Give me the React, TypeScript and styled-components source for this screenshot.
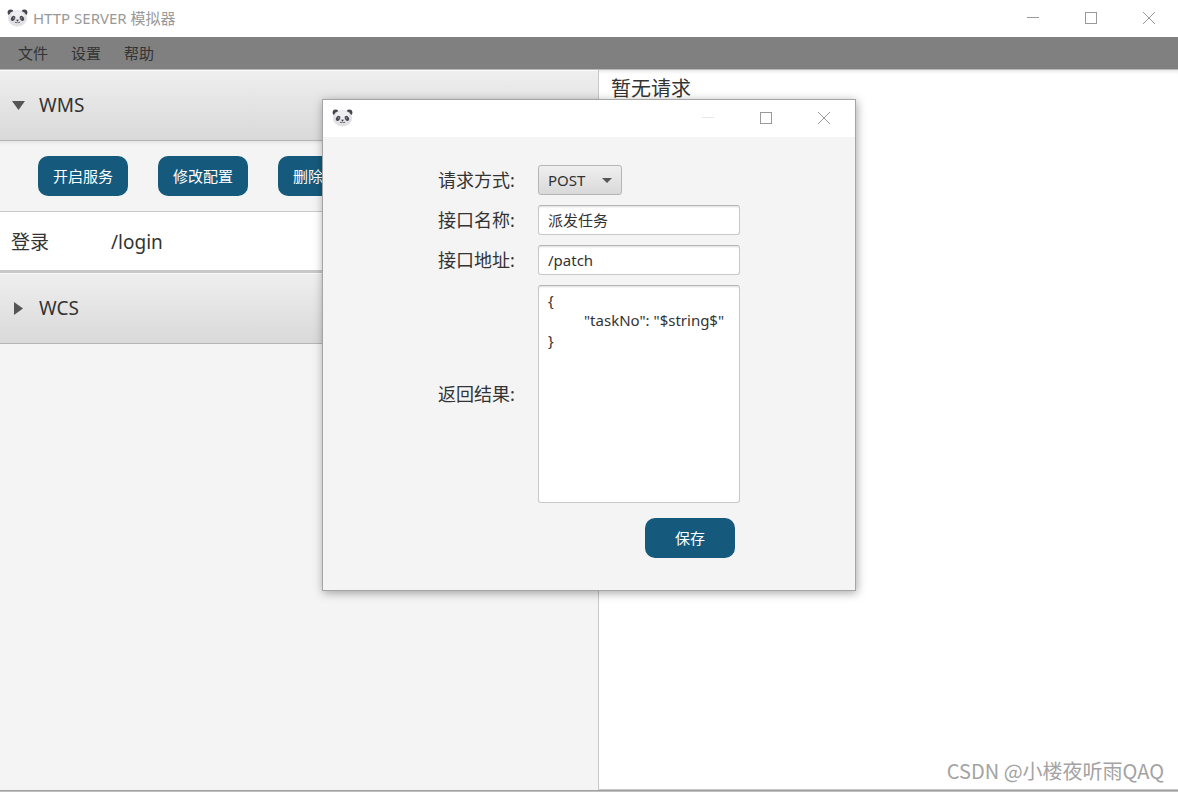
import React from "react";
import styled, { createGlobalStyle } from "styled-components";

const GlobalStyle = createGlobalStyle`
  * {
    box-sizing: border-box;
  }
  body {
    margin: 0;
    color: #333333;
    background: #f4f4f4;
    font-family: "Noto Sans", "Noto Sans CJK SC", sans-serif;
    font-size: 15px;
  }
  button, input, select, textarea {
    margin: 0;
    font: inherit;
    color: inherit;
  }
`;

const AppWindow = styled.div`
  position: relative;
  display: flex;
  flex-direction: column;
  min-height: 100vh;
`;

const TitleBar = styled.header<{ $start: number; $end?: number }>`
  display: flex;
  align-items: center;
  height: 37px;
  padding: 0 ${(p) => p.$end ?? 0}px 1px ${(p) => p.$start}px;
  background: #ffffff;
`;

const Title = styled.h1`
  margin: 0 0 0 5px;
  font-size: 15px;
  line-height: 20px;
  font-weight: 400;
  color: #999999;
`;

const WindowControls = styled.div`
  display: flex;
  align-self: stretch;
  margin-left: auto;
`;

const ControlButton = styled.button<{ $faded?: boolean }>`
  display: flex;
  align-items: center;
  justify-content: center;
  width: 58px;
  padding: 0;
  border: 0;
  background: transparent;
  color: ${(p) => (p.$faded ? "#e6e6e6" : "#999999")};
`;

const MenuBar = styled.nav`
  display: flex;
  align-items: center;
  gap: 23px;
  height: 33px;
  padding: 0 18px;
  background: #808080;
  border-bottom: 1px solid #b8b8b8;
`;

const MenuItem = styled.button`
  padding: 0;
  border: 0;
  background: transparent;
  line-height: 20px;
`;

const Body = styled.main`
  flex: 1;
  display: grid;
  grid-template-columns: 599fr 579fr;
`;

const ServicePane = styled.section`
  min-width: 0;
  border-right: 1px solid #c8c8c8;
`;

const RequestPane = styled.section`
  min-width: 0;
  padding: 5px 12px;
  background: #ffffff;
  border-bottom: 1px solid #c8c8c8;
  box-shadow: inset 0 5px 4px -4px #dddddd;
`;

const EmptyNote = styled.p`
  margin: 0;
  font-size: 20px;
  line-height: 28px;
`;

const ServiceHeader = styled.button`
  display: flex;
  align-items: center;
  gap: 14px;
  width: 100%;
  height: 71px;
  padding: 0 12px;
  border: 0;
  border-bottom: 1px solid #b5b5b5;
  background: linear-gradient(#efefef, #d9d9d9);
  box-shadow: inset 0 1px #fafafa;
  font-size: 19px;
  line-height: 26px;
`;

const Toolbar = styled.div`
  display: flex;
  align-items: center;
  gap: 30px;
  height: 71px;
  padding: 0 38px;
  border-bottom: 1px solid #c8c8c8;
  box-shadow: inset 0 5px 4px -4px #dddddd;
`;

const ActionButton = styled.button`
  width: 90px;
  height: 40px;
  padding: 0 0 2px;
  border: 0;
  border-radius: 10px;
  background: #155a7d;
  color: #ffffff;
`;

const EndpointRow = styled.div`
  display: grid;
  grid-template-columns: 100px 1fr;
  align-items: center;
  height: 61px;
  padding: 2px 11px 0;
  background: #ffffff;
  border-bottom: 3px solid #c8c8c8;
  font-size: 19px;
  line-height: 26px;
`;

const StatusEdge = styled.footer`
  height: 2px;
  background: #c0c0c0;
  border-top: 1px solid #a0a0a0;
`;

const Dialog = styled.div`
  position: absolute;
  top: 99px;
  left: 50%;
  width: 534px;
  margin-left: -267px;
  border: 1px solid #a5a5a5;
  background: #f4f4f4;
  box-shadow: 1px 2px 9px rgba(0, 0, 0, 0.35);
`;

const Form = styled.form`
  display: grid;
  grid-template-columns: 100px 202px;
  justify-content: center;
  align-items: center;
  row-gap: 10px;
  padding: 28px 0 32px;
`;

const Label = styled.label`
  font-size: 18px;
  line-height: 26px;
`;

const SelectWrap = styled.div`
  display: grid;
  width: 84px;
  align-items: center;

  > * {
    grid-area: 1 / 1;
  }

  > svg {
    justify-self: end;
    margin-right: 10px;
    pointer-events: none;
  }
`;

const Select = styled.select`
  appearance: none;
  width: 100%;
  height: 30px;
  padding: 0 9px;
  border: 1px solid #b5b5b5;
  border-radius: 3px;
  background: linear-gradient(#efefef, #d9d9d9);
`;

const TextInput = styled.input`
  width: 100%;
  height: 30px;
  padding: 0 9px 1px;
  border: 1px solid #c8c8c8;
  border-top-color: #b5b5b5;
  border-radius: 3px;
  background: #ffffff;
  box-shadow: inset 0 2px 2px -1px #dddddd;
`;

const TextArea = styled.textarea`
  display: block;
  width: 100%;
  height: 218px;
  padding: 4px 9px;
  border: 1px solid #c8c8c8;
  border-top-color: #b5b5b5;
  border-radius: 3px;
  background: #ffffff;
  box-shadow: inset 0 2px 2px -1px #dddddd;
  line-height: 20px;
  tab-size: 36px;
  white-space: pre;
  overflow: hidden;
  resize: none;
`;

const FormActions = styled.div`
  grid-column: 2;
  display: flex;
  justify-content: flex-end;
  padding: 5px 5px 0 0;
`;

const Watermark = styled.div`
  position: absolute;
  right: 14px;
  bottom: 8px;
  font-family: "Noto Sans CJK SC", sans-serif;
  font-size: 20px;
  line-height: 26px;
  color: #a3a3a3;
`;

const Panda = () => (
  <svg width="21" height="18" viewBox="0 0 21 18" aria-hidden="true">
    <circle cx="3.6" cy="3.6" r="3" fill="#45454f" />
    <circle cx="17.4" cy="3.6" r="3" fill="#45454f" />
    <ellipse cx="10.5" cy="9.3" rx="9.6" ry="8.1" fill="#e0e0e5" />
    <ellipse cx="10.5" cy="6" rx="6.5" ry="4" fill="#eeeef1" />
    <ellipse cx="6.1" cy="9.4" rx="2" ry="2.7" transform="rotate(28 6.1 9.4)" fill="#484852" />
    <ellipse cx="14.9" cy="9.4" rx="2" ry="2.7" transform="rotate(-28 14.9 9.4)" fill="#484852" />
    <circle cx="6.6" cy="8.9" r="0.7" fill="#a9a9b4" />
    <circle cx="14.4" cy="8.9" r="0.7" fill="#a9a9b4" />
    <path d="M9 10.8h3l-1.5 1.6z" fill="#3c3c46" />
    <path d="M8 13.2q1.3 1 2.5-.2q1.2 1.2 2.5.2" fill="none" stroke="#55555f" strokeWidth="0.9" />
  </svg>
);

const Controls = ({ fadedMinimize = false }: { fadedMinimize?: boolean }) => (
  <WindowControls>
    <ControlButton type="button" aria-label="最小化" $faded={fadedMinimize}>
      <svg width="12" height="12" viewBox="0 0 12 12">
        <path d="M0 5.5h12" stroke="currentColor" />
      </svg>
    </ControlButton>
    <ControlButton type="button" aria-label="最大化">
      <svg width="12" height="12" viewBox="0 0 12 12">
        <rect x="0.5" y="0.5" width="11" height="11" fill="none" stroke="currentColor" />
      </svg>
    </ControlButton>
    <ControlButton type="button" aria-label="关闭">
      <svg width="12" height="12" viewBox="0 0 12 12">
        <path d="M0 0l12 12M12 0L0 12" stroke="currentColor" />
      </svg>
    </ControlButton>
  </WindowControls>
);

const Disclosure = ({ open = false }: { open?: boolean }) => (
  <svg width="13" height="13" viewBox="0 0 13 13" aria-hidden="true">
    <path d={open ? "M0 2h13L6.5 11z" : "M2 0l9 6.5L2 13z"} fill="#555555" />
  </svg>
);

const MENUS = ["文件", "设置", "帮助"];
const ACTIONS = ["开启服务", "修改配置", "删除服务"];
const RESULT = '{\n\t"taskNo": "$string$"\n}';

export default function App() {
  return (
    <AppWindow>
      <GlobalStyle />
      <TitleBar $start={7}>
        <Panda />
        <Title>HTTP SERVER 模拟器</Title>
        <Controls />
      </TitleBar>
      <MenuBar>
        {MENUS.map((name) => (
          <MenuItem key={name} type="button">{name}</MenuItem>
        ))}
      </MenuBar>
      <Body>
        <ServicePane>
          <ServiceHeader type="button" aria-expanded="true">
            <Disclosure open />
            WMS
          </ServiceHeader>
          <Toolbar>
            {ACTIONS.map((name) => (
              <ActionButton key={name} type="button">{name}</ActionButton>
            ))}
          </Toolbar>
          <EndpointRow>
            <span>登录</span>
            <span>/login</span>
          </EndpointRow>
          <ServiceHeader type="button" aria-expanded="false">
            <Disclosure />
            WCS
          </ServiceHeader>
        </ServicePane>
        <RequestPane>
          <EmptyNote>暂无请求</EmptyNote>
        </RequestPane>
      </Body>
      <StatusEdge />
      <Watermark>CSDN @小楼夜听雨QAQ</Watermark>

      <Dialog role="dialog" aria-label="接口">
        <TitleBar $start={9} $end={2}>
          <Panda />
          <Controls fadedMinimize />
        </TitleBar>
        <Form onSubmit={(e) => e.preventDefault()}>
          <Label htmlFor="method">请求方式:</Label>
          <SelectWrap>
            <Select id="method" defaultValue="POST">
              <option>GET</option>
              <option>POST</option>
            </Select>
            <svg width="10" height="5" viewBox="0 0 10 5" aria-hidden="true">
              <path d="M0 0h10L5 5z" fill="#555555" />
            </svg>
          </SelectWrap>
          <Label htmlFor="name">接口名称:</Label>
          <TextInput id="name" type="text" defaultValue="派发任务" />
          <Label htmlFor="path">接口地址:</Label>
          <TextInput id="path" type="text" defaultValue="/patch" />
          <Label htmlFor="result">返回结果:</Label>
          <TextArea id="result" defaultValue={RESULT} spellCheck={false} />
          <FormActions>
            <ActionButton type="submit">保存</ActionButton>
          </FormActions>
        </Form>
      </Dialog>
    </AppWindow>
  );
}
